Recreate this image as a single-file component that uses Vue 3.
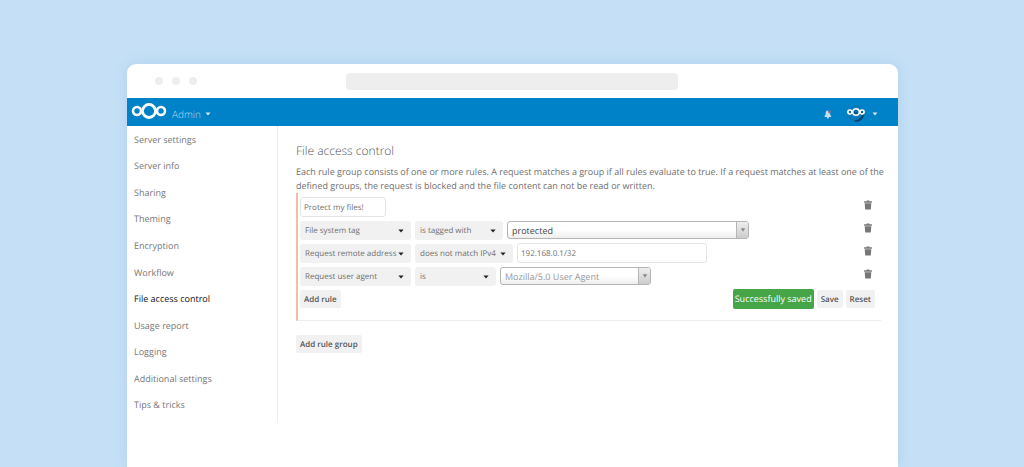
<script setup>
import { ref } from 'vue'

const sections = [
  'Server settings',
  'Server info',
  'Sharing',
  'Theming',
  'Encryption',
  'Workflow',
  'File access control',
  'Usage report',
  'Logging',
  'Additional settings',
  'Tips & tricks',
]
const current = 'File access control'

const groupName = ref('Protect my files!')

const rules = [
  { check: 'File system tag', operator: 'is tagged with', size: 'medium', kind: 'combo', value: 'protected' },
  { check: 'Request remote address', operator: 'does not match IPv4', size: 'large', kind: 'text', value: '192.168.0.1/32' },
  { check: 'Request user agent', operator: 'is', size: 'small', kind: 'agent', value: 'Mozilla/5.0 User Agent' },
]
</script>

<template>
  <div class="page">
    <div class="window">
      <div class="chrome">
        <div class="dots"><i></i><i></i><i></i></div>
        <div class="address"></div>
      </div>

      <header class="topbar">
        <a href="#" class="logo" aria-label="Home">
          <svg viewBox="0 0 36 18" fill="none" stroke="#fff">
            <circle cx="18" cy="9" r="6.5" stroke-width="2.8" />
            <circle cx="6" cy="9" r="4" stroke-width="2.6" />
            <circle cx="30" cy="9" r="4" stroke-width="2.6" />
          </svg>
        </a>
        <button class="app-menu" type="button">
          Admin
          <svg class="caret" viewBox="0 0 6 4"><path d="M0.5 0.5h5L3 3.4z" fill="#d3e8f5" /></svg>
        </button>
        <div class="tools">
          <button type="button" class="bell" aria-label="Notifications">
            <svg viewBox="0 0 8 9">
              <path d="M3.6.6C2.1.9 1.8 2 1.7 3.4 1.6 4.9 1 5.3.6 5.9v1h6.5v-1C6.6 5.3 6 4.9 5.9 3.6z" fill="#bfdff2" />
              <circle cx="3.9" cy="7.5" r="1.1" fill="#bfdff2" />
              <circle cx="5.6" cy="1.9" r="1.4" fill="#8d6f8c" />
            </svg>
          </button>
          <button type="button" class="user" aria-label="Account">
            <svg class="avatar" viewBox="0 0 20 18">
              <circle cx="10" cy="8.6" r="8.4" fill="#0879b9" />
              <path d="M18.4 8.4A8.4 8.4 0 0 1 8 16.6l1.5-1.6 2.6-.6 2.6-2.2 2.3-3.8z" fill="#07476f" />
              <path d="M3 6.5a4.2 4.2 0 0 0 3 3.5h8a4 4 0 0 0 3.4-3.6z" fill="#075c92" />
              <g fill="none" stroke="#fff" stroke-width="1.6">
                <circle cx="10" cy="7" r="3.3" />
                <circle cx="3.9" cy="7" r="2" />
                <circle cx="16.1" cy="7" r="2" />
              </g>
            </svg>
            <svg class="caret" viewBox="0 0 6 4"><path d="M0.5 0.5h5L3 3.4z" fill="#d3e8f5" /></svg>
          </button>
        </div>
      </header>

      <div class="body">
        <nav class="sidebar">
          <a v-for="s in sections" :key="s" href="#" :class="{ active: s === current }">{{ s }}</a>
        </nav>

        <main class="content">
          <h2>File access control</h2>
          <p>
            Each rule group consists of one or more rules. A request matches a group if all rules
            evaluate to true. If a request matches at least one of the defined groups, the request
            is blocked and the file content can not be read or written.
          </p>

          <section class="group">
            <div class="row">
              <input v-model="groupName" class="field name" type="text" aria-label="Rule group name" />
              <button type="button" class="trash" aria-label="Delete group">
                <svg viewBox="0 0 8 10"><path d="M2.7.5h2.6v.8H7.9v1.5H.1V1.3h2.6zM.7 3.3h6.6L6.8 9.5H1.2z" fill="#777" /></svg>
              </button>
            </div>

            <div v-for="r in rules" :key="r.check" class="row">
              <div class="select check">
                <select aria-label="Check"><option>{{ r.check }}</option></select>
                <svg class="arrow" viewBox="0 0 6 4"><path d="M0.4 0.4h5.2L3 3.6z" fill="#222" /></svg>
              </div>
              <div class="select" :class="r.size">
                <select aria-label="Operator"><option>{{ r.operator }}</option></select>
                <svg class="arrow" viewBox="0 0 6 4"><path d="M0.4 0.4h5.2L3 3.6z" fill="#222" /></svg>
              </div>
              <input v-if="r.kind === 'text'" class="field value" type="text" :value="r.value" aria-label="Value" />
              <div v-else class="combo" :class="r.kind">
                <select aria-label="Value"><option>{{ r.value }}</option></select>
                <span class="combo-arrow">
                  <svg viewBox="0 0 6 4"><path d="M0.8 0.2h4.4L3 3.8z" fill="#888" /></svg>
                </span>
              </div>
              <button type="button" class="trash" aria-label="Delete rule">
                <svg viewBox="0 0 8 10"><path d="M2.7.5h2.6v.8H7.9v1.5H.1V1.3h2.6zM.7 3.3h6.6L6.8 9.5H1.2z" fill="#777" /></svg>
              </button>
            </div>

            <div class="row actions">
              <button type="button" class="btn">Add rule</button>
              <span class="saved" role="status">Successfully saved</span>
              <button type="button" class="btn">Save</button>
              <button type="button" class="btn">Reset</button>
            </div>
          </section>

          <button type="button" class="btn add-group">Add rule group</button>
        </main>
      </div>
    </div>
  </div>
</template>

<style>
body {
  background: #c5e0f6;
}
</style>

<style scoped>
.page,
.page * {
  box-sizing: border-box;
}
.page {
  display: flex;
  flex-direction: column;
  min-height: 100vh;
  padding: 64px 126px 0 127px;
  font-family: 'Open Sans', 'Noto Sans', sans-serif;
  font-size: 9px;
  text-rendering: geometricPrecision;
  color: #6f6f6f;
}
button,
input,
select {
  font: inherit;
  color: inherit;
  text-rendering: inherit;
  margin: 0;
  padding: 0;
  border: 0;
  background: none;
}
svg {
  display: block;
}
.window {
  flex: 1;
  background: #fff;
  border-radius: 9px 9px 0 0;
  box-shadow: 0 0 14px rgba(110, 165, 210, 0.25);
  overflow: hidden;
}
.chrome {
  display: flex;
  align-items: center;
  height: 34px;
  padding: 0 220px 0 28px;
}
.dots {
  display: flex;
  gap: 9px;
  width: 191px;
}
.dots i {
  width: 8px;
  height: 8px;
  border-radius: 50%;
  background: #eee;
}
.address {
  flex: 1;
  height: 17px;
  border-radius: 4px;
  background: #eee;
}
.topbar {
  display: flex;
  align-items: center;
  height: 28px;
  padding: 0 20px 0 4px;
  background: #0082c9;
}
.logo {
  padding-bottom: 2px;
}
.logo svg {
  width: 36px;
  height: 18px;
}
.app-menu {
  display: flex;
  align-items: center;
  gap: 4px;
  margin-left: 5px;
  padding-top: 4px;
  font-size: 10px;
  font-weight: 300;
  color: #b5dcf2;
}
.caret {
  width: 6px;
  height: 4px;
}
.tools {
  display: flex;
  align-items: center;
  gap: 14px;
  margin-left: auto;
  padding-top: 4px;
}
.bell svg {
  width: 8px;
  height: 9px;
}
.user {
  display: flex;
  align-items: center;
  gap: 6px;
}
.avatar {
  width: 20px;
  height: 18px;
}
.body {
  display: flex;
  align-items: flex-start;
}
.sidebar {
  display: flex;
  flex-direction: column;
  flex: 0 0 151px;
  height: 297px;
  padding-bottom: 5px;
  border-right: 1px solid #eee;
}
.sidebar a {
  flex: 1;
  display: flex;
  align-items: center;
  padding-left: 7px;
  color: #777;
  text-decoration: none;
}
.sidebar a.active {
  color: #111;
}
.content {
  flex: 1;
  min-width: 0;
  padding: 16px 17px 0 18px;
}
h2 {
  margin: 0 0 6px;
  font-size: 12px;
  line-height: 17px;
  font-weight: 300;
  color: #555;
}
p {
  margin: 0 -8px 0 0;
  line-height: 14px;
}
.group {
  margin-bottom: 14px;
  padding: 4px 6px 11px 2px;
  border-left: 2px solid #f0bfa8;
  border-bottom: 1px solid #eee;
}
.row {
  display: flex;
  align-items: center;
  gap: 4px;
  height: 20px;
  margin-bottom: 3px;
  font-size: 8px;
}
.field {
  height: 20px;
  padding: 0 3px;
  border: 1px solid #e4e4e4;
  border-radius: 3px;
  background: #fff;
}
.name {
  width: 86px;
}
.value {
  width: 190px;
}
.select {
  position: relative;
  height: 19px;
}
.select select {
  appearance: none;
  width: 100%;
  height: 100%;
  padding-left: 5px;
  border-radius: 3px;
  background: #f1f1f1;
}
.arrow {
  position: absolute;
  top: 8px;
  right: 7px;
  width: 6px;
  height: 4px;
  pointer-events: none;
}
.check {
  width: 111px;
}
.medium {
  width: 88px;
}
.large {
  width: 98px;
}
.small {
  width: 81px;
}
.combo {
  position: relative;
  height: 18px;
  border: 1px solid #b5b5b5;
  border-radius: 3px;
  background: linear-gradient(#fff 50%, #eee);
  overflow: hidden;
  font-size: 9px;
  color: #444;
}
.combo select {
  appearance: none;
  width: 100%;
  height: 100%;
  padding-left: 4px;
}
.combo.combo {
  width: 242px;
}
.combo.agent {
  width: 151px;
  color: #999;
}
.combo-arrow {
  position: absolute;
  top: 0;
  right: 0;
  bottom: 0;
  display: flex;
  align-items: center;
  justify-content: center;
  width: 12px;
  border-left: 1px solid #b5b5b5;
  background: linear-gradient(#eee, #ccc);
  pointer-events: none;
}
.combo-arrow svg {
  width: 6px;
  height: 4px;
}
.trash {
  margin-left: auto;
  padding: 0 3px 4px 0;
}
.trash svg {
  width: 8px;
  height: 10px;
}
.btn {
  height: 18px;
  padding: 0 4px;
  border-radius: 2px;
  background: #f1f1f1;
  font-size: 8px;
  font-weight: 600;
  color: #555;
}
.actions {
  gap: 3px;
  margin-bottom: 0;
}
.saved {
  margin-left: auto;
  height: 20px;
  padding: 0 2px;
  border-radius: 2px;
  background: #46a546;
  font-size: 9px;
  line-height: 20px;
  color: #fff;
}
.add-group {
  display: block;
}
</style>
